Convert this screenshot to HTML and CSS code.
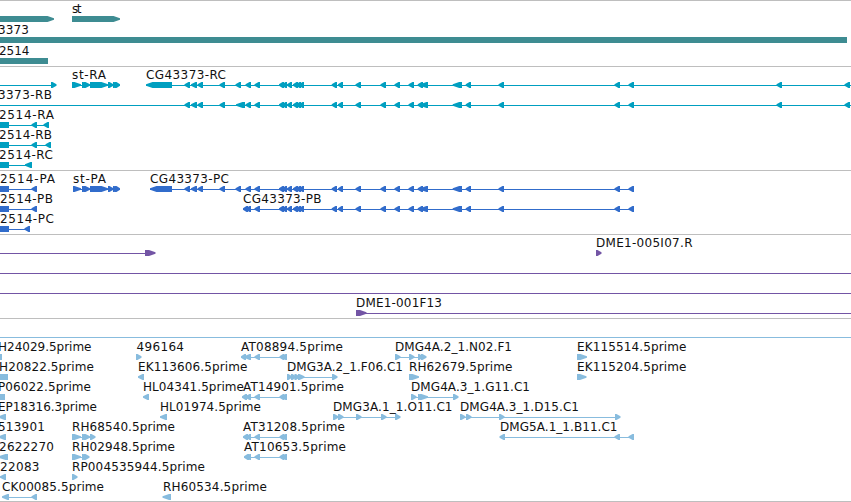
FILE: index.html
```
<!DOCTYPE html>
<html lang="en">
<head>
<meta charset="utf-8">
<title>Genome browser</title>
<link rel="stylesheet" href="styles.css">
</head>
<body>
<main class="browser" id="browser"></main>
<script src="tracks.js"></script>
</body>
</html>
```
FILE: styles.css
```
body {
  margin: 0;
  background: #fff;
}
.browser {
  display: flex;
  flex-direction: column;
  width: 851px;
  height: 502px;
  overflow: hidden;
}
.track {
  display: flex;
  flex-direction: column;
  border-top: 1px solid #bebebe;
  padding: 1px 0 2px;
}
.track.genes { padding-bottom: 1px; color: #3e8c92; }
.track.transcripts { color: #009fc0; }
.track.proteins { color: #316ccb; }
.track.clones { color: #7355a5; }
.track.ests { color: #88bcde; padding-bottom: 1px; border-bottom: 1px solid #bebebe; }
.row {
  display: block;
  flex: none;
  width: 851px;
  height: 20px;
  overflow: hidden;
}
.genes .row { height: 21px; }
.feature { fill: currentColor; }
.label {
  fill: #111;
  font: 12px "DejaVu Sans", sans-serif;
}
```
FILE: tracks.js
```
// Feature: [direction, lineStart, lineEnd, [[exonStart, exonEnd], ...]]
// Label: [text, start, end]
const exons = [[184.5,190],[191,197],[197.5,203],[219.5,225],[235.5,241],[245.5,251],[254.5,260]];
const shared = [[279,284],[282,287],[287,292],[293,298],[296,301],[299,304],[331.7,337],[338,343],
  [355.5,361],[380.5,386],[394.5,400],[408.5,414],[417.7,423],[420,428],[452.7,462],[465.7,471],
  [498.5,504],[614.5,620],[628.5,634]];
const tail = [[776.5,782],[844.5,850]];
const stExons = [[72,81],[82,87.5],[84,90],[90,108],[108,113.5],[113,118],[115,120]];
const at = x => ['l', x, 287, [[x, x+5], [x+3, 251], [254.5,260], [279.5,284.5], [282,287]]];

const tracks = [
  ['genes', [
    [[['st',72,81.5]], [['r',0,0,[[0,54]]], ['r',0,0,[[72,120]]]]],
    [[['3373',-2,29]], [['n',0,0,[[0,847]]]]],
    [[['2514',-1,29.5]], [['n',0,0,[[0,48]]]]]
  ]],
  ['transcripts', [
    [[['st-RA',72,106],['CG43373-RC',146,226]],
      [['r',0,52,[[51,56.5]]], ['r',72,120,stExons], ['l',146,851,[[146,172],...exons,...shared,...tail]]]],
    [[['3373-RB',-2,52]],
      [['l',0,851,[...exons.slice(0,4),[236,245],...exons.slice(5),...shared,...tail]]]],
    [[['2514-RA',-1,54]], [['n',0,49,[[0,9]]],['l',0,0,[[31.5,37],[43.5,49]]]]],
    [[['2514-RB',-1,52]], [['n',0,51,[[0,9]]],['l',0,0,[[31.5,37],[45.5,51]]]]],
    [[['2514-RC',-1,53]], [['n',0,31,[[0,9]]],['l',0,0,[[25,32]]]]]
  ]],
  ['proteins', [
    [[['2514-PA',0,55],['st-PA',73,106],['CG43373-PC',150,229]],
      [['n',0,36,[[0,9]]],['l',0,0,[[31.5,37]]], ['r',73,120,[[73,81],...stExons.slice(1)]],
       ['l',150,634,[[150,172],...exons,...shared]]]],
    [[['2514-PB',0,53],['CG43373-PB',243,321.5]],
      [['n',0,36,[[0,9]]],['l',0,0,[[31.5,37]]], ['l',243,634,[[243,248],[245.5,251],[254.5,260],...shared]]]],
    [[['2514-PC',0,54]], [['n',0,30,[[0,9]]],['l',0,0,[[24.5,30]]]]]
  ]],
  ['clones', [
    [[['DME1-005I07.R',596,692.5]], [['r',0,150,[[145,155.5]]], ['r',0,0,[[596,601.5]]]]],
    [[], [['r',0,851,[]]]],
    [[], [['r',0,851,[]]]],
    [[['DME1-001F13',356,442]], [['r',356,851,[[356,366.5]]]]]
  ]],
  ['ests', [
    [[], [['r',0,851,[]]]],
    [[['H24029.5prime',-2,91.5],['496164',136.5,184],['AT08894.5prime',241,343],['DMG4A.2_1.N02.F1',395,512],['EK115514.5prime',577,686.5]],
      [['n',0,0,[[0,2]]], ['r',0,0,[[136,141.5]]], at(241), ['r',395,424,[[395,400.5],[409,414.5],[418,423],[421,426.5]]], ['r',0,0,[[577,587]]]]],
    [[['H20822.5prime',-1,94],['EK113606.5prime',138,247.5],['DMG3A.2_1.F06.C1',287,403],['RH62679.5prime',409,512.5],['EK115204.5prime',577,686.5]],
      [['n',0,0,[[0,8]]], ['l',0,0,[[138,144]]], ['r',287,334,[[287,292],[291,296],[294.5,299.5],[298,304.5],[332,337.5]]], ['r',0,0,[[409,419]]], ['r',0,0,[[577,586.5]]]]],
    [[['P06022.5prime',-2,91],['HL04341.5prime',143,244],['AT14901.5prime',243,344],['DMG4A.3_1.G11.C1',411,530]],
      [['n',0,0,[[0,5]]], ['l',0,0,[[143,149]]], at(242), ['r',411,455,[[411,416.5],[418,423],[420,428],[453,458.5]]]]],
    [[['EP18316.3prime',-2,97],['HL01974.5prime',160,261],['DMG3A.1_1.O11.C1',333,452.5],['DMG4A.3_1.D15.C1',460,579]],
      [['l',0,0,[[-1,6]]], ['l',0,0,[[160,167]]], ['r',333,396,[[333,338.5],[338,343.5],[356,361.5],[381,386.5],[395,400.5]]], ['r',460,616,[[460,465.5],[466,471.5],[499,504.5],[615,620.5]]]]],
    [[['513901',-2,45],['RH68540.5prime',72,175],['AT31208.5prime',243,345],['DMG5A.1_1.B11.C1',500,617.5]],
      [['l',0,0,[[-1,6]]], ['r',72,92,[[72,81],[82,87.5],[84,90],[90,95.5]]], at(243), ['l',500,634,[[499.5,505],[614.5,620],[628.5,634]]]]],
    [[['2622270',-1,54],['RH02948.5prime',72,175],['AT10653.5prime',244,346]],
      [['l',0,0,[[-1,8]]], ['r',72,86,[[72,81],[82,87],[84,89.5]]], at(244)]],
    [[['22083',0,39.5],['RP004535944.5prime',72,205]], [['l',0,0,[[0,6]]], ['r',0,0,[[72,77.5]]]]],
    [[['CK00085.5prime',2,104],['RH60534.5prime',163,267]], [['l',4,37,[[2,9],[31.5,37]]], ['l',0,0,[[162.5,171]]]]]
  ]]
];

function exonShape(dir, [a, b]) {
  if (dir === 'n') return `M${a} 14H${b}V20H${a}Z`;
  const head = Math.min(b - a, 8);
  // Blunt tip, two pixels tall, over the connecting line
  return dir === 'r'
    ? `M${a} 14H${b - head + 1.5}L${b} 16.2V17.8L${b - head + 1.5} 20H${a}Z`
    : `M${b} 14H${a + head - 1.5}L${a} 16.2V17.8L${a + head - 1.5} 20H${b}Z`;
}

function rowMarkup([labels, features]) {
  let out = '';
  for (const [dir, from, to, parts] of features) {
    if (to > from) out += `<rect class="feature" x="${from}" y="17" width="${to - from}" height="1"/>`;
    for (const part of parts) out += `<path class="feature" d="${exonShape(dir, part)}"/>`;
  }
  for (const [text, start, end] of labels) {
    out += `<text class="label" x="${start}" y="11" textLength="${end - start}">${text}</text>`;
  }
  return `<svg class="row">${out}</svg>`;
}

document.getElementById('browser').innerHTML = tracks
  .map(([name, rows]) => `<section class="track ${name}">${rows.map(rowMarkup).join('')}</section>`)
  .join('');
```
